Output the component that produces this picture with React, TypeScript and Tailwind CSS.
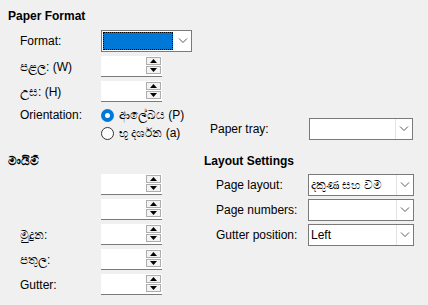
import React from 'react';

const Chevron = () => (
  <svg width="10" height="6" viewBox="0 0 10 6">
    <path d="M1 0.5 L5 4.5 L9 0.5" fill="none" stroke="#5a5a5a" strokeWidth="1" />
  </svg>
);

const Select = ({ value, width, focused }: { value?: string; width: string; focused?: boolean }) => (
  <div className={`flex h-[22px] ${width} border border-[#7a7a7a] bg-white`}>
    {focused ? (
      <div className="flex-1 m-[1px] border border-dotted border-black bg-[#0078d7]" />
    ) : (
      <div className="flex-1 flex items-center pl-[2px] overflow-hidden whitespace-nowrap">{value}</div>
    )}
    <div className={`flex w-[17px] items-center justify-center ${focused ? '' : 'border-l border-[#e3e3e3]'}`}>
      <Chevron />
    </div>
  </div>
);

const Spin = () => (
  <div className="flex h-[21px] w-[61px] bg-white border-b border-[#7a7a7a]">
    <div className="flex-1" />
    <div className="flex w-[15px] flex-col gap-[1px] pt-[1px] mr-[1px]">
      <div className="flex h-[8px] items-center justify-center border border-[#adadad] bg-[#f3f3f3]">
        <svg width="7" height="4" viewBox="0 0 7 4"><path d="M3.5 0 L7 4 L0 4 Z" fill="#000" /></svg>
      </div>
      <div className="flex h-[8px] items-center justify-center border border-[#adadad] bg-[#f3f3f3]">
        <svg width="7" height="4" viewBox="0 0 7 4"><path d="M0 0 L7 0 L3.5 4 Z" fill="#000" /></svg>
      </div>
    </div>
  </div>
);

const Radio = ({ checked, label }: { checked?: boolean; label: string }) => (
  <div className="flex h-4 items-center gap-[5px]">
    {checked ? (
      <span className="flex h-[13px] w-[13px] items-center justify-center rounded-full bg-[#0078d7]">
        <span className="h-[5px] w-[5px] rounded-full bg-white" />
      </span>
    ) : (
      <span className="h-[13px] w-[13px] rounded-full border border-[#333] bg-white" />
    )}
    <span>{label}</span>
  </div>
);

const Row = ({ label, children, labelWidth }: { label: string; children: React.ReactNode; labelWidth: string }) => (
  <div className="flex items-center">
    <div className={`${labelWidth} pl-3`}>{label}</div>
    {children}
  </div>
);

export default function App() {
  return (
    <div
      className="w-[428px] h-[305px] bg-[#f0f0f0] text-[12px] leading-4 text-black px-2 pt-2 overflow-hidden"
      style={{ fontFamily: '"Liberation Sans", Arial, sans-serif' }}
    >
      {/* Paper Format */}
      <div className="font-bold h-4">Paper Format</div>
      <div className="mt-[6px] flex flex-col gap-[4px]">
        <Row label="Format:" labelWidth="w-[93px]">
          <Select width="w-[91px]" focused />
        </Row>
        <Row label="පළල: (W)" labelWidth="w-[93px]">
          <Spin />
        </Row>
        <Row label="උස: (H)" labelWidth="w-[93px]">
          <Spin />
        </Row>
      </div>
      <div className="mt-[5px] flex items-end">
        <div className="flex w-[202px]">
          <div className="w-[93px] pl-3 h-4 flex items-center">Orientation:</div>
          <div className="flex flex-col gap-[2px]">
            <Radio checked label="ආලේඛය (P)" />
            <Radio label="භූ දර්ශන (a)" />
          </div>
        </div>
        <div className="flex items-center mb-[1px]">
          <div className="w-[99px]">Paper tray:</div>
          <Select width="w-[104px]" />
        </div>
      </div>

      {/* Margins + Layout Settings */}
      <div className="mt-[12px] flex">
        <div className="w-[196px]">
          <div className="font-bold h-4">මායිම්</div>
          <div className="mt-[5px] flex flex-col gap-[4px]">
            <Row label="" labelWidth="w-[93px]"><Spin /></Row>
            <Row label="" labelWidth="w-[93px]"><Spin /></Row>
            <Row label="මුදුන:" labelWidth="w-[93px]"><Spin /></Row>
            <Row label="පතුල:" labelWidth="w-[93px]"><Spin /></Row>
            <Row label="Gutter:" labelWidth="w-[93px]"><Spin /></Row>
          </div>
        </div>
        <div className="flex-1">
          <div className="font-bold h-4">Layout Settings</div>
          <div className="mt-[5px] flex flex-col gap-[3px]">
            <Row label="Page layout:" labelWidth="w-[104px]">
              <Select width="w-[106px]" value="දකුණ සහ වම" />
            </Row>
            <Row label="Page numbers:" labelWidth="w-[104px]">
              <Select width="w-[106px]" />
            </Row>
            <Row label="Gutter position:" labelWidth="w-[104px]">
              <Select width="w-[106px]" value="Left" />
            </Row>
          </div>
        </div>
      </div>
    </div>
  );
}
